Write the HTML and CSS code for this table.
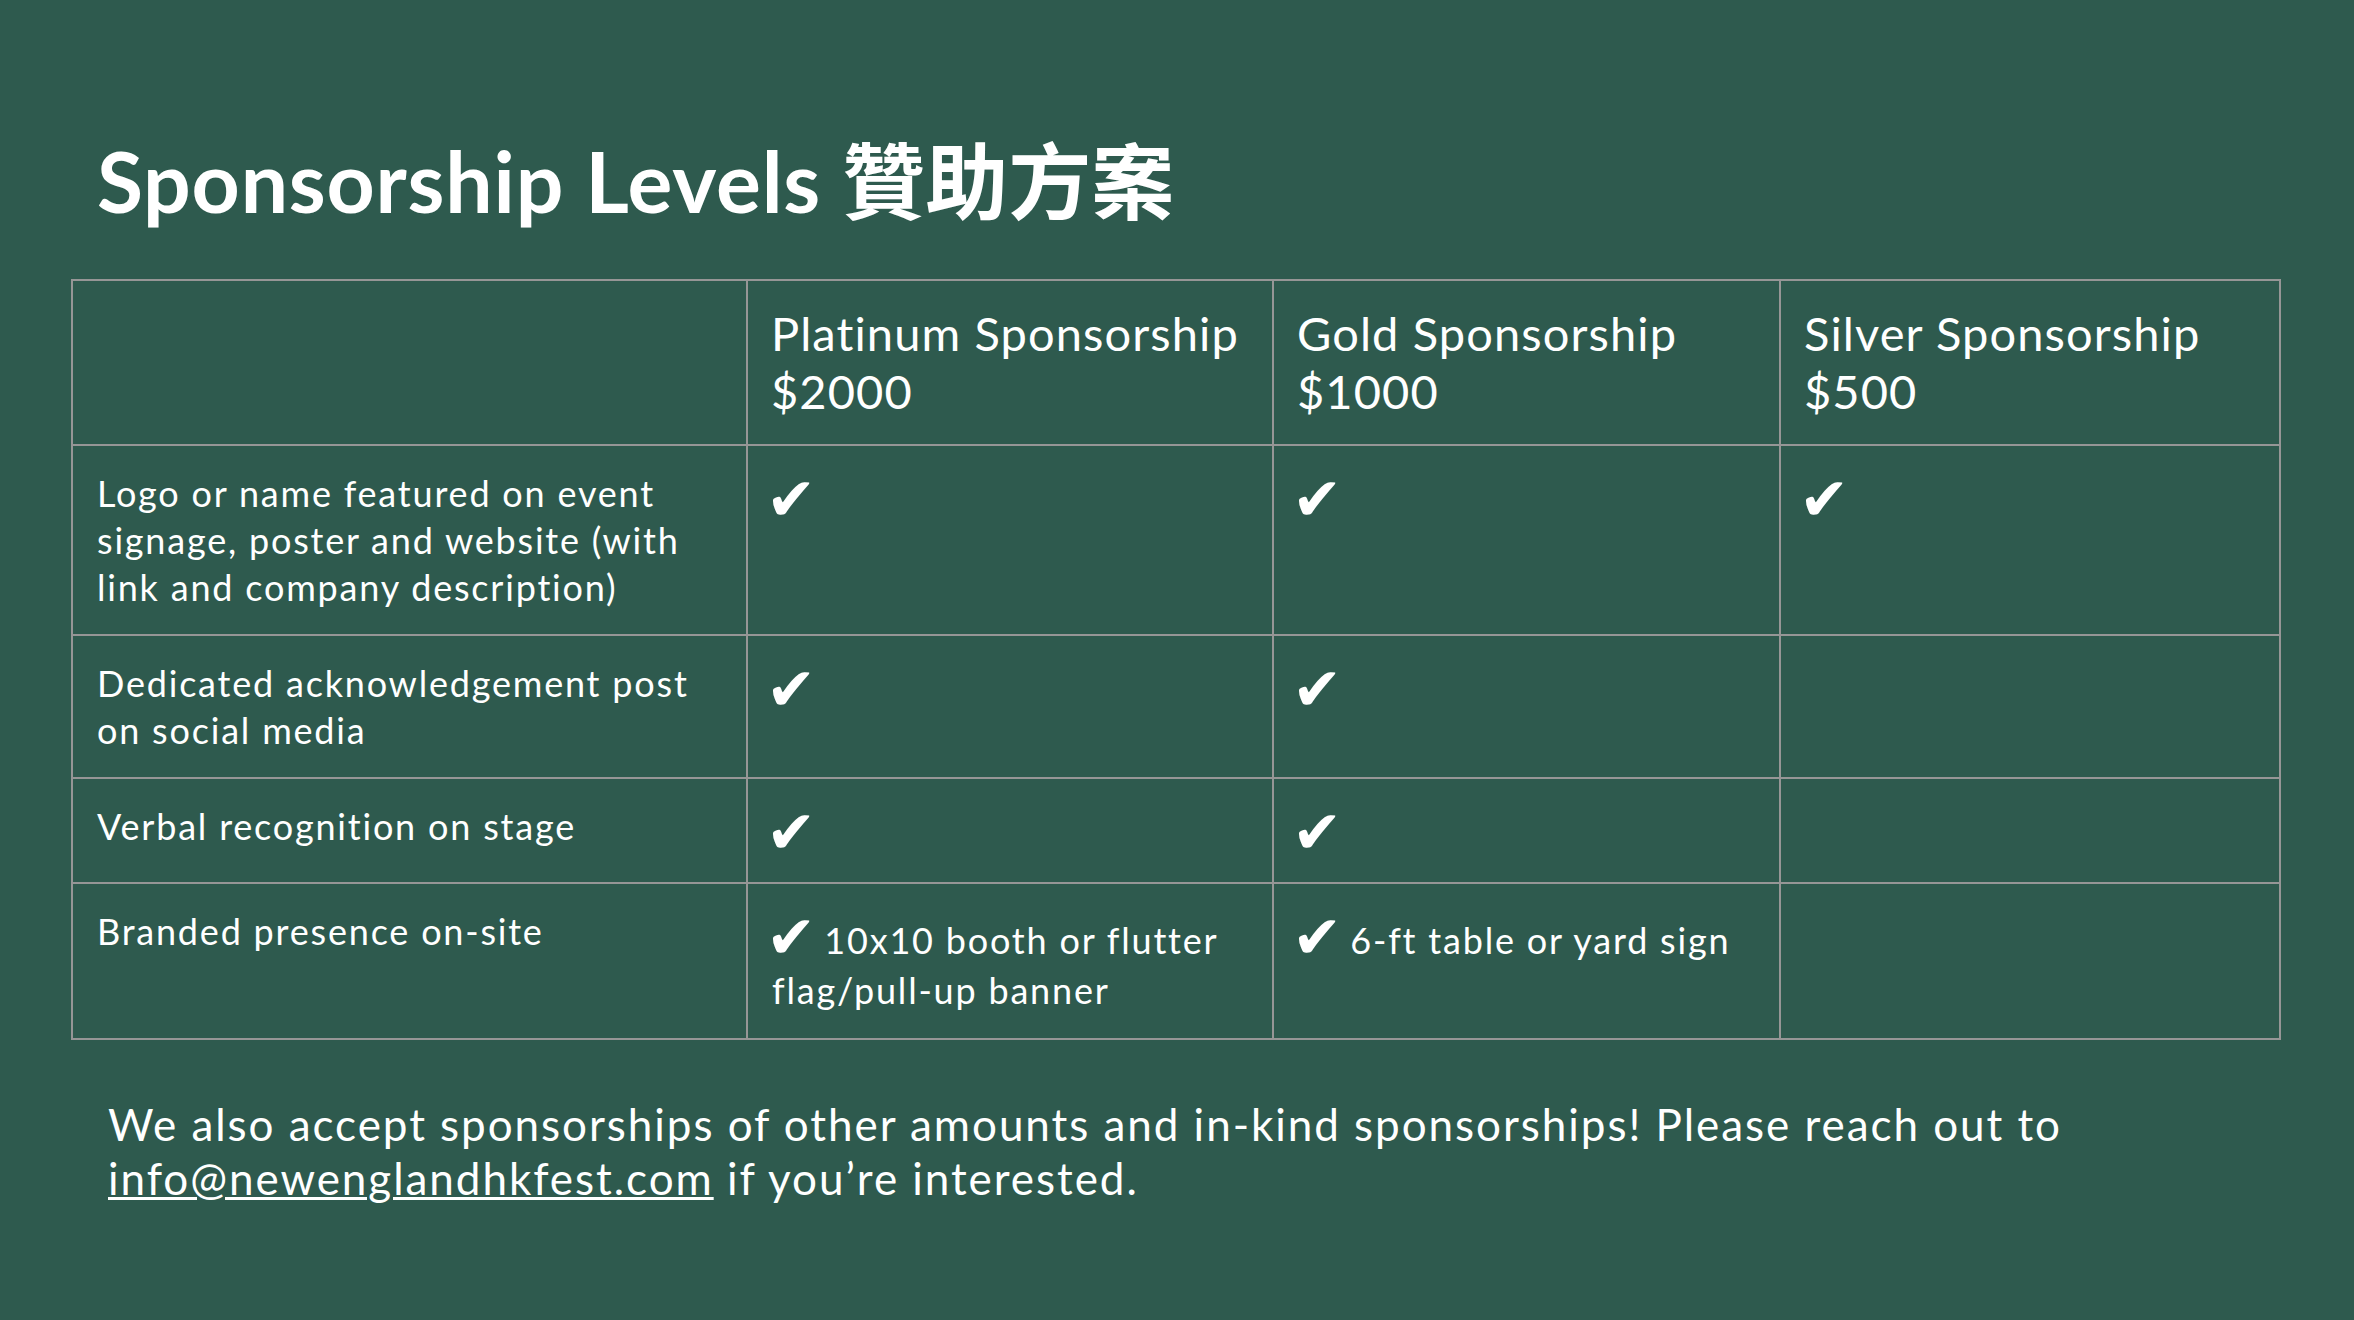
FILE: index.html
```html
<!DOCTYPE html>
<html lang="en">
<head>
<meta charset="utf-8">
<title>Sponsorship Levels</title>
<link rel="stylesheet" href="styles.css">
</head>
<body>
<div class="slide">
  <h1 class="title">Sponsorship Levels <span class="cjk">贊助方案</span></h1>
  <table class="levels">
    <colgroup>
      <col class="col-feature">
      <col class="col-plat">
      <col class="col-gold">
      <col class="col-silver">
    </colgroup>
    <thead>
      <tr>
        <th></th>
        <th><span class="tier">Platinum Sponsorship</span><span class="price">$2000</span></th>
        <th><span class="tier">Gold Sponsorship</span><span class="price">$1000</span></th>
        <th><span class="tier">Silver Sponsorship</span><span class="price">$500</span></th>
      </tr>
    </thead>
    <tbody>
      <tr>
        <td>Logo or name featured on event<br>signage, poster and website (with<br>link and company description)</td>
        <td><span class="check">✔</span></td>
        <td><span class="check">✔</span></td>
        <td><span class="check">✔</span></td>
      </tr>
      <tr>
        <td>Dedicated acknowledgement post<br>on social media</td>
        <td><span class="check">✔</span></td>
        <td><span class="check">✔</span></td>
        <td></td>
      </tr>
      <tr>
        <td>Verbal recognition on stage</td>
        <td><span class="check">✔</span></td>
        <td><span class="check">✔</span></td>
        <td></td>
      </tr>
      <tr>
        <td>Branded presence on-site</td>
        <td class="detail"><span class="check">✔</span> 10x10 booth or flutter<br>flag/pull-up banner</td>
        <td class="detail"><span class="check">✔</span> 6-ft table or yard sign</td>
        <td></td>
      </tr>
    </tbody>
  </table>
  <p class="note">We also accept sponsorships of other amounts and in-kind sponsorships! Please reach out to<br><a class="mail" href="mailto:info@newenglandhkfest.com">info@newenglandhkfest.com</a> if you’re interested.</p>
</div>
</body>
</html>
```

FILE: styles.css
```css
html, body {
  margin: 0;
  padding: 0;
  background: #2e5a4e;
}

body {
  font-family: Lato, "Noto Sans CJK TC", sans-serif;
  color: #ffffff;
  font-variant-ligatures: none;
  font-feature-settings: "liga" 0, "clig" 0;
}

.slide {
  width: 2354px;
  height: 1320px;
  box-sizing: border-box;
  padding: 131px 0 0 71px;
  overflow: hidden;
}

.title {
  margin: 0 0 48px 26px;
  height: 100px;
  font-size: 84px;
  line-height: 100px;
  font-weight: 700;
  letter-spacing: 0.8px;
  white-space: nowrap;
}

.cjk {
  font-family: "Noto Sans CJK TC", sans-serif;
  font-size: 83px;
  font-weight: 700;
  line-height: 1;
  letter-spacing: 0;
}

.levels {
  border-collapse: collapse;
  table-layout: fixed;
  width: 2208px;
}

.col-feature { width: 675px; }
.col-plat { width: 526px; }
.col-gold { width: 507px; }
.col-silver { width: 500px; }

.levels th,
.levels td {
  border: 2px solid #969696;
  padding: 24px 26px 23px 24px;
  vertical-align: top;
  text-align: left;
  font-weight: 400;
}

.levels th {
  font-size: 47px;
  line-height: 58px;
  letter-spacing: 1.1px;
  padding-top: 23px;
  padding-bottom: 24px;
  padding-left: 23px;
}

.tier,
.price {
  display: block;
  white-space: nowrap;
}

.levels td {
  font-size: 36px;
  line-height: 47px;
  letter-spacing: 1.8px;
}

.levels td.detail {
  line-height: 50px;
}

.check {
  position: relative;
  top: 4px;
  font-family: "DejaVu Sans", sans-serif;
  font-size: 60px;
  line-height: 50px;
  letter-spacing: 0;
  margin-left: -6px;
  margin-right: -3px;
}

.note {
  margin: 57px 0 0 37px;
  font-size: 44px;
  line-height: 54px;
  letter-spacing: 1.95px;
}

.mail {
  color: #ffffff;
  text-decoration: underline;
  text-decoration-thickness: 3px;
}
```
